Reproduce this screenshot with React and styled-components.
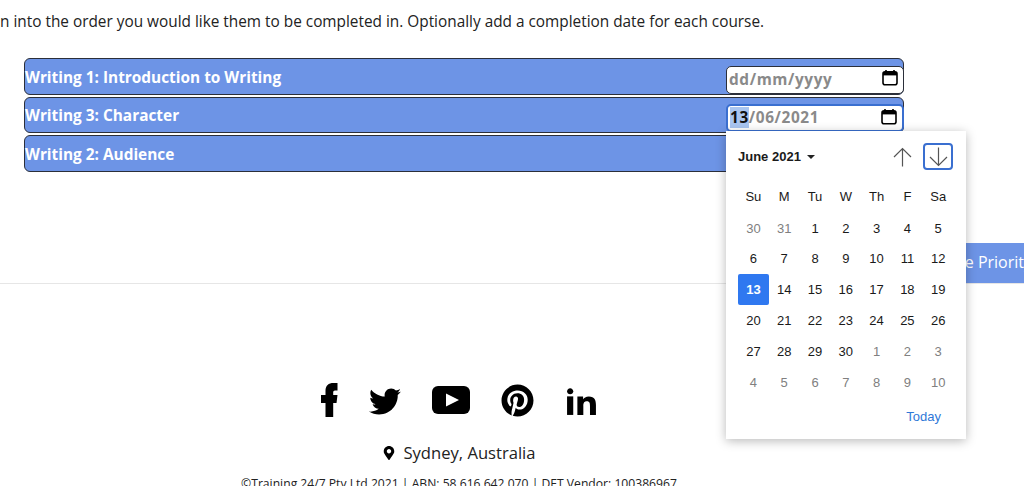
import styled, { createGlobalStyle } from "styled-components";
import { FaMapMarkerAlt, FaPinterest } from "react-icons/fa";
import { ImTwitter, ImLinkedin2 } from "react-icons/im";

const GlobalStyle = createGlobalStyle`
  html, body {
    margin: 0;
    padding: 0;
    background: #fff;
    font-family: "Open Sans", sans-serif;
  }
`;

const Page = styled.div`
  position: relative;
  width: 1024px;
  height: 486px;
  overflow: hidden;
  color: #222;
`;

const Intro = styled.p`
  margin: 0;
  padding-top: 11px;
  font-size: 15.36px;
  line-height: 22px;
  white-space: nowrap;
`;

const CourseList = styled.div`
  display: flex;
  flex-direction: column;
  gap: 2px;
  width: 880px;
  margin: 25px 0 0 24px;
`;

const CourseRow = styled.div`
  box-sizing: border-box;
  display: flex;
  justify-content: space-between;
  align-items: flex-end;
  height: 36.5px;
  background: #6d94e6;
  border: 1.5px solid #2b2f3a;
  border-radius: 6px;
`;

const CourseName = styled.span`
  align-self: center;
  padding-top: 2px;
  font-size: 15.4px;
  font-weight: 700;
  color: #fff;
`;

const DateField = styled.div`
  box-sizing: border-box;
  display: flex;
  align-items: center;
  justify-content: space-between;
  width: 178px;
  height: 28px;
  margin-right: -1px;
  padding: 0 5px 1px 2px;
  background: #fff;
  border: ${(p) => (p.$focused ? "2px solid #3a6fd0" : "1.5px solid #2b2f3a")};
  border-radius: 5px;
  font-size: 15.4px;
  font-weight: 700;
  letter-spacing: 0.6px;
  color: #8a8a8a;

  svg {
    margin-bottom: 3px;
  }
`;

const Segment = styled.span`
  background: #a9c5f0;
  color: #111;
`;

const ActionRow = styled.div`
  display: flex;
  justify-content: flex-end;
  margin-top: 71.5px;
`;

const PriorityButton = styled.div`
  display: flex;
  align-items: center;
  box-sizing: border-box;
  height: 40px;
  margin-right: -8px;
  padding: 0 0 2px 14px;
  background: #6d94e6;
  color: #fff;
  font-size: 16px;
  white-space: nowrap;
`;

const Divider = styled.hr`
  margin: 0;
  border: 0;
  border-top: 1px solid #e6e6e6;
`;

const Footer = styled.footer`
  display: flex;
  flex-direction: column;
  align-items: center;
  padding: 98px 106px 0 0;
`;

const Socials = styled.div`
  display: flex;
  align-items: center;
  gap: 31px;
  height: 36px;
  color: #000;
`;

const SocialIcon = styled.span`
  display: flex;
  align-items: center;
  justify-content: center;
  width: ${(p) => p.$w}px;
  font-size: ${(p) => p.$size}px;
`;

const Location = styled.div`
  display: flex;
  align-items: center;
  gap: 7px;
  margin-top: 24px;
  font-size: 16.6px;
  line-height: 22px;
`;

const Legal = styled.div`
  margin-top: 11px;
  font-size: 12.15px;
  line-height: 18px;
  white-space: nowrap;
`;

const Picker = styled.div`
  position: absolute;
  left: 726px;
  top: 131px;
  box-sizing: border-box;
  width: 240px;
  height: 308px;
  padding: 0 12px;
  background: #fff;
  box-shadow: 0 2px 10px rgba(0, 0, 0, 0.28);
  font-family: "Liberation Sans", Arial, sans-serif;
  font-size: 13px;
  color: #1a1a1a;
`;

const PickerHead = styled.div`
  display: flex;
  align-items: center;
  justify-content: space-between;
  height: 51px;
  padding-right: 1px;
`;

const MonthLabel = styled.div`
  display: flex;
  align-items: center;
  gap: 6px;
  font-size: 13px;
  font-weight: 700;
`;

const Caret = styled.span`
  width: 0;
  height: 0;
  border-left: 4px solid transparent;
  border-right: 4px solid transparent;
  border-top: 4px solid #222;
`;

const ArrowGroup = styled.div`
  display: flex;
  align-items: center;
  gap: 6px;
`;

const ArrowButton = styled.div`
  box-sizing: border-box;
  display: flex;
  align-items: center;
  justify-content: center;
  width: 30px;
  height: 27px;
  border: ${(p) => (p.$active ? "2px solid #3a6fd0" : "2px solid transparent")};
  border-radius: 4px;
`;

const DayGrid = styled.div`
  display: grid;
  grid-template-columns: repeat(7, 30.8px);
  grid-auto-rows: 30.8px;
`;

const WeekDay = styled.div`
  display: flex;
  align-items: center;
  justify-content: center;
  padding-bottom: 2px;
`;

const DayCell = styled.div`
  display: flex;
  align-items: center;
  justify-content: center;
  border-radius: 2px;
  background: ${(p) => (p.$selected ? "#2f78f0" : "transparent")};
  color: ${(p) => (p.$selected ? "#fff" : p.$muted ? "#808080" : "#1a1a1a")};
  font-weight: ${(p) => (p.$selected ? 700 : 400)};
`;

const PickerFoot = styled.div`
  display: flex;
  justify-content: flex-end;
  padding: 11px 13px 0 0;
  color: #2f78d8;
`;

const FacebookIcon = () => (
  <svg width="17" height="34" viewBox="0 0 17 34" fill="#000">
    <path d="M4.500 34V20H0V12H4.500V8C4.500 2.500 7.500 0 12.500 0H16.500V7.500H14C12.800 7.500 12.200 8.200 12.200 9.500V12H16.500L15.500 20H12.200V34Z" />
  </svg>
);

const YoutubeIcon = () => (
  <svg width="38" height="28" viewBox="0 0 38 28">
    <rect width="38" height="28" rx="6" fill="#000" />
    <path d="M14 7.500L27 14 14 20.500Z" fill="#fff" />
  </svg>
);

const CalendarIcon = () => (
  <svg width="16" height="17" viewBox="0 0 16 17" fill="none">
    <path d="M4 1v2M12 1v2" stroke="#000" strokeWidth="1.6" />
    <rect x="1" y="2.800" width="14" height="13" rx="2" stroke="#000" strokeWidth="1.6" />
    <rect x="1" y="3" width="14" height="3.400" fill="#000" />
  </svg>
);

const UpArrow = () => (
  <svg width="19" height="20" viewBox="0 0 19 20" fill="none" stroke="#555" strokeWidth="1.2">
    <path d="M9.500 19.500V1.500M1 10L9.500 1.500 18 10" />
  </svg>
);

const DownArrow = () => (
  <svg width="19" height="20" viewBox="0 0 19 20" fill="none" stroke="#555" strokeWidth="1.2">
    <path d="M9.500 .5v18M1 10l8.500 8.500L18 10" />
  </svg>
);

const days = [
  ["30", 1], ["31", 1], ["1"], ["2"], ["3"], ["4"], ["5"],
  ["6"], ["7"], ["8"], ["9"], ["10"], ["11"], ["12"],
  ["13", 0, 1], ["14"], ["15"], ["16"], ["17"], ["18"], ["19"],
  ["20"], ["21"], ["22"], ["23"], ["24"], ["25"], ["26"],
  ["27"], ["28"], ["29"], ["30"], ["1", 1], ["2", 1], ["3", 1],
  ["4", 1], ["5", 1], ["6", 1], ["7", 1], ["8", 1], ["9", 1], ["10", 1],
];

function App() {
  return (
    <Page>
      <GlobalStyle />
      <Intro>n into the order you would like them to be completed in. Optionally add a completion date for each course.</Intro>
      <CourseList>
        <CourseRow>
          <CourseName>Writing 1: Introduction to Writing</CourseName>
          <DateField>
            <span>dd/mm/yyyy</span>
            <CalendarIcon />
          </DateField>
        </CourseRow>
        <CourseRow>
          <CourseName>Writing 3: Character</CourseName>
          <DateField $focused>
            <span><Segment>13</Segment>/06/2021</span>
            <CalendarIcon />
          </DateField>
        </CourseRow>
        <CourseRow>
          <CourseName>Writing 2: Audience</CourseName>
        </CourseRow>
      </CourseList>
      <ActionRow>
        <PriorityButton>Save Priority</PriorityButton>
      </ActionRow>
      <Divider />
      <Footer>
        <Socials>
          <SocialIcon $w={17} $size={34}><FacebookIcon /></SocialIcon>
          <SocialIcon $w={32} $size={33}><ImTwitter /></SocialIcon>
          <SocialIcon $w={38} $size={38}><YoutubeIcon /></SocialIcon>
          <SocialIcon $w={33} $size={33}><FaPinterest /></SocialIcon>
          <SocialIcon $w={33} $size={41}><ImLinkedin2 /></SocialIcon>
        </Socials>
        <Location>
          <FaMapMarkerAlt size={14} color="#000" />
          Sydney, Australia
        </Location>
        <Legal>©Training 24/7 Pty Ltd 2021 | ABN: 58 616 642 070 | DET Vendor: 100386967</Legal>
      </Footer>
      <Picker>
        <PickerHead>
          <MonthLabel>June 2021 <Caret /></MonthLabel>
          <ArrowGroup>
            <ArrowButton><UpArrow /></ArrowButton>
            <ArrowButton $active><DownArrow /></ArrowButton>
          </ArrowGroup>
        </PickerHead>
        <DayGrid>
          {["Su", "M", "Tu", "W", "Th", "F", "Sa"].map((d) => (
            <WeekDay key={d}>{d}</WeekDay>
          ))}
          {days.map(([label, muted, selected], i) => (
            <DayCell key={i} $muted={muted} $selected={selected}>{label}</DayCell>
          ))}
        </DayGrid>
        <PickerFoot>Today</PickerFoot>
      </Picker>
    </Page>
  );
}

export default App;
